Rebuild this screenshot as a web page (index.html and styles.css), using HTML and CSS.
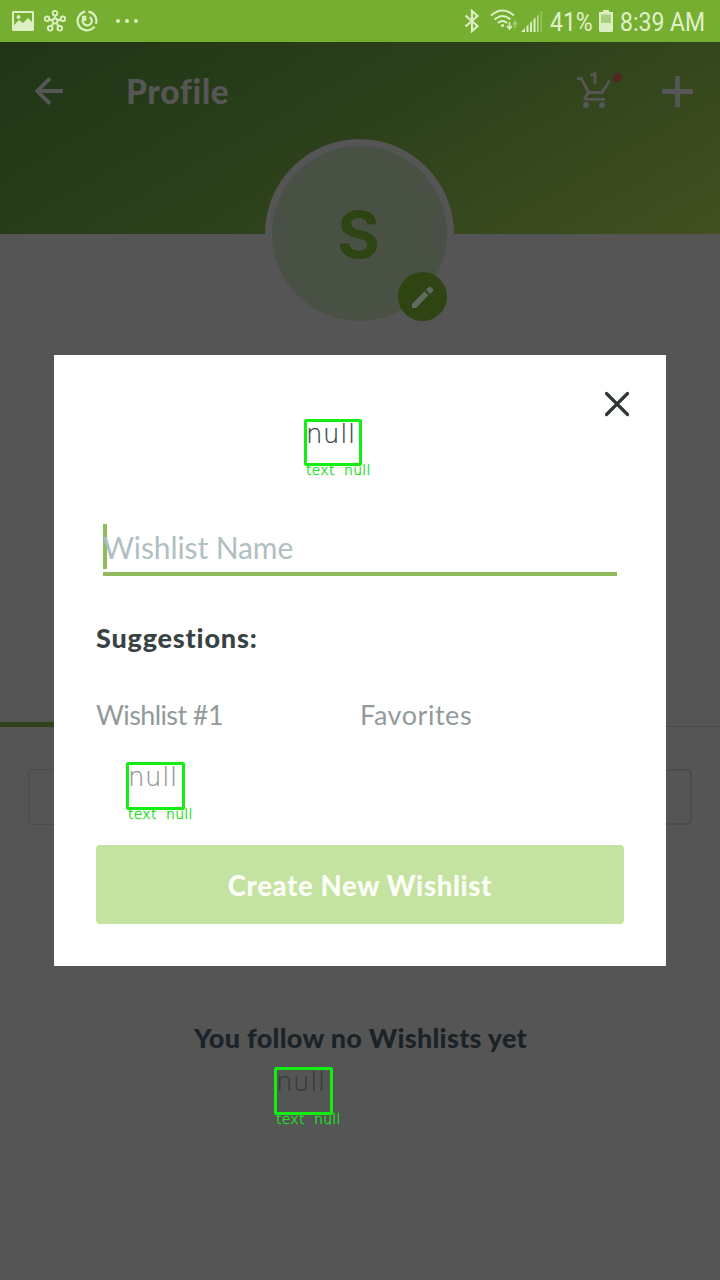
FILE: index.html
```html
<!DOCTYPE html>
<html lang="en">
<head>
<meta charset="utf-8">
<title>Profile</title>
<link rel="stylesheet" href="styles.css">
</head>
<body>
<div class="phone">
  <div class="status">
    <div class="status-left">
      <svg width="22" height="20" viewBox="0 0 22 20"><path fill="#dcefc2" fill-rule="evenodd" d="M1 0h20l1 1v18l-1 1H1l-1-1V1zM2 2v12l5-5 4 3 5-5 4 4V2zm4.500 2a2 2 0 1 1 0 4 2 2 0 0 1 0-4z"/></svg>
      <svg width="22" height="22" viewBox="0 0 22 22" fill="none" stroke="#dcefc2" stroke-width="1.900"><circle cx="11" cy="11" r="2.500"/><circle cx="11" cy="3.200" r="2.300"/><circle cx="3" cy="8.800" r="2.300"/><circle cx="19" cy="8.800" r="2.300"/><circle cx="6.200" cy="18.300" r="2.300"/><circle cx="15.800" cy="18.300" r="2.300"/><path d="M11 5.500v3M5.200 9.500l3.300 1M16.800 9.500l-3.300 1M7.500 16.300l2-3.300M14.500 16.300l-2-3.300"/></svg>
      <svg width="22" height="22" viewBox="0 0 24 24" fill="none" stroke="#dcefc2" stroke-width="2.400"><path d="M10 1.800A10.300 10.300 0 1 0 20.200 18.200M13.500 1.800A10.300 10.300 0 0 1 21.800 15"/><path stroke-width="2.400" d="M15 7.700A5 5 0 1 1 8.500 8.500M6.500 7.500H10V12"/></svg>
      <svg class="dots" width="24" height="4" viewBox="0 0 24 4" fill="#dcefc2"><circle cx="2" cy="2" r="2"/><circle cx="11" cy="2" r="2"/><circle cx="20" cy="2" r="2"/></svg>
    </div>
    <div class="status-right">
      <svg width="16" height="24" viewBox="0 0 16 24" fill="none" stroke="#dcefc2" stroke-width="2.200"><path d="M1.500 6.500l12 10.500L8 22V2l5.500 5-12 10.500"/></svg>
      <svg class="wifi" width="28" height="22" viewBox="0 0 28 22" fill="none" stroke="#dcefc2" stroke-width="2"><path d="M1 6.500Q12.500-3.500 24 6.500M4.500 10.500Q12.500 3.500 20.500 10.500M8 14Q12.500 10 17 14"/><circle cx="12.500" cy="16.500" r="1.600" fill="#dcefc2" stroke="none"/><path stroke-width="1.600" d="M19.500 13v6M17 17l2.500 3 2.500-3"/><path stroke="#a5cd78" stroke-width="1.500" d="M25 19v-6M23 15.500l2-3 2 3"/></svg>
      <svg class="signal" width="21" height="22" viewBox="0 0 21 22"><path fill="#dcefc2" d="M0 22l4-4v4zM5.500 16.500l2-2V22h-2zM9 13l2-2v11H9zM12.500 9.500l2-2V22h-2z"/><path fill="#c1de9b" d="M16 6l1.500-1.500V22H16z"/><path fill="#93c65c" d="M19.500 2L21 .5V22h-1.500z"/></svg>
      <span class="pct">41%</span>
      <svg class="battery" width="14" height="22" viewBox="0 0 14 22"><path fill="#dcefc2" d="M4 0h6v2h4v19l-1 1H1l-1-1V2h4z"/><path fill="#a9cf7e" d="M2 4.500h10V13H2z"/></svg>
      <span class="time">8:39 AM</span>
    </div>
  </div>
  <div class="header">
    <svg class="back" width="28" height="28" viewBox="0 0 28 28" fill="none" stroke="#565656" stroke-width="3.800"><path d="M28 14H3M15 1.300L2.300 14 15 26.700"/></svg>
    <h1 class="title">Profile</h1>
    <svg class="cart" width="48" height="38" viewBox="0 0 48 38"><path fill="none" stroke="#565656" stroke-width="2.800" d="M1 7.500h4.500l7 14h13.500l7.500-12M12.500 21.500l-3.200 5q-.8 1.800 1 1.800H29"/><circle cx="10" cy="34" r="3" fill="#565656"/><circle cx="26" cy="34" r="3" fill="#565656"/><path fill="none" stroke="#565656" stroke-width="3" d="M14.500 4.500l4.500-2V13"/><circle cx="41.500" cy="6.500" r="4.500" fill="#54261e"/></svg>
    <svg class="plus" width="31" height="31" viewBox="0 0 31 31"><path d="M15.500 0v31M0 15.500h31" stroke="#565656" stroke-width="4.800"/></svg>
  </div>
  <div class="avatar"><span class="initial">S</span>
    <div class="edit"><svg width="22" height="22" viewBox="0 0 22 22" fill="#626960"><path d="M0 18L12.500 5.300l4 4L4 22H0zM14 3.800L16.800 1q1-.9 2 0L21 3.200q.9 1 0 2L18 8z"/></svg></div>
  </div>
  <div class="tabs"><div class="tab-on"></div><div class="tab-off"></div></div>
  <div class="fields"><div class="field"></div><div class="field thick"></div></div>
  <div class="empty">
    <h2 class="empty-title">You follow no Wishlists yet</h2>
    <div class="mark mark-empty"><div class="box">null</div><div class="label">text&nbsp; null</div></div>
  </div>
  <div class="modal">
    <div class="close"><svg width="26" height="26" viewBox="0 0 26 26"><path d="M2.500 2.500l21 21M23.500 2.500l-21 21" stroke="#2f3636" stroke-width="3.200" stroke-linecap="round"/></svg></div>
    <div class="mark mark-title"><div class="box">null</div><div class="label">text&nbsp; null</div></div>
    <div class="input"><span class="caret"></span><span class="placeholder">Wishlist Name</span></div>
    <h3 class="suggest">Suggestions:</h3>
    <div class="options"><span class="opt-a">Wishlist #1</span><span class="opt-b">Favorites</span></div>
    <div class="mark mark-option"><div class="box">null</div><div class="label">text&nbsp; null</div></div>
    <div class="button">Create New Wishlist</div>
  </div>
</div>
</body>
</html>
```
FILE: styles.css
```css
* { box-sizing: border-box; margin: 0; }
body { background: #555; font-family: Lato, sans-serif; font-variant-ligatures: none; }
svg { display: block; flex: none; }
.phone { position: relative; width: 720px; height: 1280px; overflow: hidden; background: #555; }
.status { display: flex; justify-content: space-between; height: 42px; padding: 0 14px 0 12px; background: #76ae32; }
.status-left { display: flex; align-items: center; gap: 10px; }
.dots { margin-left: 8px; }
.status-right { display: flex; align-items: center; color: #e0f1c9; font: 26px/42px Roboto, sans-serif; }
.wifi { margin: -2px 0 0 10px; }
.signal { margin-left: 3px; }
.pct, .time { white-space: nowrap; transform-origin: 0 50%; transform: scaleX(.885); padding-top: 2px; }
.pct { width: 42px; margin-left: 8px; }
.battery { margin-left: 7px; margin-top: -1px; }
.time { width: 86px; margin-left: 7px; }
.header { display: flex; height: 192px; padding: 0 27px 93px 35px; align-items: center; background: linear-gradient(150deg, #1f3516 0%, #2c411b 50%, #435020 100%); }
.back { margin-top: -1px; }
.title { flex: 1; margin: -1px 0 0 63px; font-size: 33.500px; line-height: 40px; letter-spacing: .600px; font-weight: 900; color: #565656; }
.cart { margin: -4px 38px 0 0; }
.plus { margin-top: -1px; }
.avatar { position: relative; display: flex; align-items: center; justify-content: center; width: 189px; height: 189px; margin: -95px 0 0 265px; border: 7px solid #555; border-radius: 50%; background: #495044; color: #2e4413; font-family: Inter, sans-serif; font-size: 65px; line-height: 80px; font-weight: 700; }
.initial { padding: 2px 2px 0 0; }
.edit { position: absolute; right: 0; bottom: 0; display: flex; align-items: center; justify-content: center; width: 49px; height: 49px; border-radius: 50%; background: #2e4413; }
.tabs { display: flex; align-items: center; height: 5px; margin-top: 394px; }
.tab-on { width: 360px; height: 5px; background: #304219; }
.tab-off { width: 360px; height: 1px; margin-top: 4px; background: #474a4a; }
.fields { display: flex; justify-content: space-between; margin-top: 42px; padding: 0 28px; }
.field { width: 318px; height: 56px; border: 1px solid #474c50; border-radius: 5px; }
.thick { border: 2px solid #484c4c; }
.empty { margin-top: 195px; }
.empty-title { display: flex; justify-content: center; padding-left: 1px; font-size: 27px; line-height: 36px; letter-spacing: .270px; font-weight: 900; color: #1b2327; white-space: nowrap; }
.modal { position: absolute; left: 54px; top: 355px; width: 612px; height: 611px; padding: 36px 42px 42px; background: #fff; }
.close { display: flex; justify-content: flex-end; height: 26px; margin-right: -6px; }
.mark { font-family: "DejaVu Sans", sans-serif; font-weight: 200; white-space: nowrap; }
.box { width: 59px; height: 48px; border: 3px solid #12ed12; border-radius: 2px; font-size: 26px; line-height: 25px; letter-spacing: .600px; text-indent: -1px; color: #394347; -webkit-text-stroke: .2px; }
.label { height: 14px; margin: -3px 0 0 2px; font-size: 14px; line-height: 15px; letter-spacing: .250px; color: #22df22; -webkit-text-stroke: .4px #22df22; }
.mark-title { margin: 2px 0 0 208px; height: 57px; }
.mark-title .box { width: 58px; height: 47px; }
.input { position: relative; display: flex; height: 53px; margin: 47px 7px 0; border-bottom: 4px solid #8fbb5d; }
.caret { position: absolute; left: 0; top: 1px; width: 4px; height: 45px; background: #8fbb5d; }
.placeholder { position: relative; font-size: 30px; line-height: 48px; letter-spacing: -.1px; color: #b0bfc1; }
.suggest { margin-top: 42px; font-size: 27px; line-height: 39px; height: 40px; letter-spacing: .800px; font-weight: 900; color: #394244; }
.options { display: grid; grid-template-columns: 1fr 1fr; margin-top: 37px; font-size: 27px; line-height: 40px; color: #929b9b; }
.opt-a { letter-spacing: -.6px; }
.opt-b { letter-spacing: .550px; }
.mark-option { height: 57px; margin: 27px 0 0 30px; }
.mark-option .box { color: #8f9898; }
.mark-empty { margin: 11px 0 0 274px; }
.mark-empty .box { color: #363b3e; }
.button { display: flex; align-items: center; justify-content: center; height: 79px; margin-top: 26px; padding-top: 2px; border-radius: 4px; background: #c4e2a0; color: #fcfff7; font-size: 27.500px; letter-spacing: .630px; font-weight: 900; }
```
